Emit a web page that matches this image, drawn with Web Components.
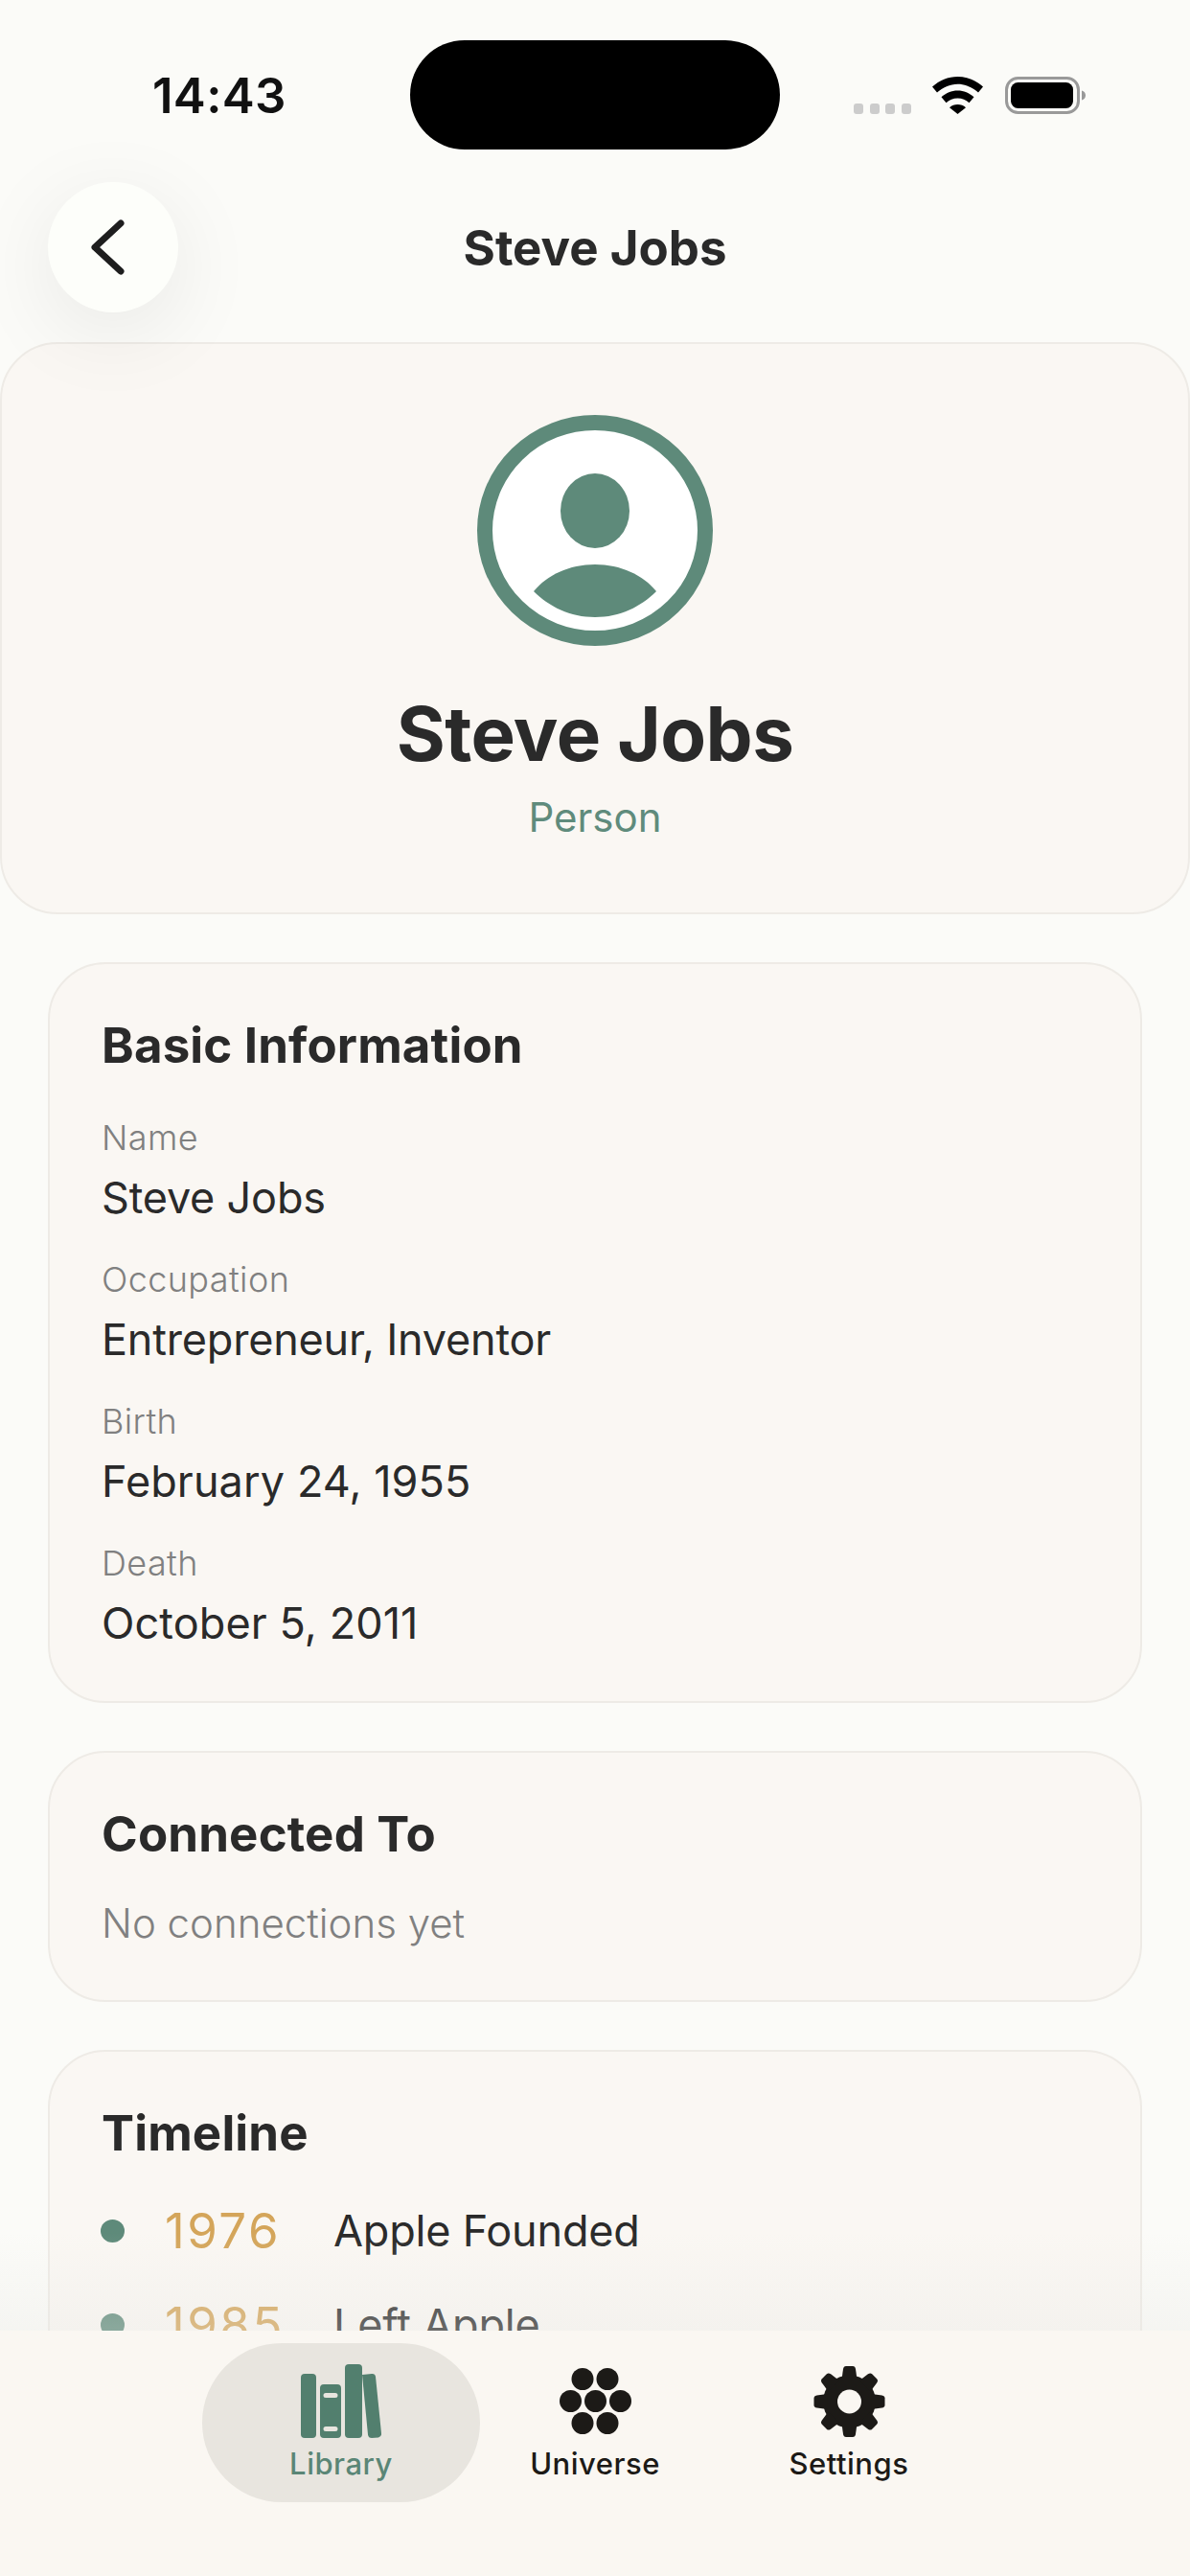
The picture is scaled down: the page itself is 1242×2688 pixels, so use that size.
<!DOCTYPE html>
<html><head><meta charset="utf-8"><style>
html,body{margin:0;padding:0;background:#FBFBF8;}
body{font-family:Inter,"Liberation Sans",sans-serif;color:#2A2A2A;}
</style></head><body>
<app-screen>
  <status-bar></status-bar>
  <nav-header>Steve Jobs</nav-header>
  <profile-card name="Steve Jobs" kind="Person"></profile-card>
  <info-card heading="Basic Information" class="fields">
    <info-field label="Name">Steve Jobs</info-field>
    <info-field label="Occupation">Entrepreneur, Inventor</info-field>
    <info-field label="Birth" date>February 24, 1955</info-field>
    <info-field label="Death" date>October 5, 2011</info-field>
  </info-card>
  <info-card heading="Connected To"><empty-note>No connections yet</empty-note></info-card>
  <info-card heading="Timeline" tall>
    <timeline-row year="1976">Apple Founded</timeline-row>
    <timeline-row year="1985">Left Apple</timeline-row>
  </info-card>
  <tab-bar slot="overlay">
    <tab-item label="Library" icon="library" active></tab-item>
    <tab-item label="Universe" icon="universe"></tab-item>
    <tab-item label="Settings" icon="settings"></tab-item>
  </tab-bar>
</app-screen>
<script>
function def(name, html, init){
  customElements.define(name, class extends HTMLElement{
    constructor(){super();this.attachShadow({mode:'open'});}
    connectedCallback(){this.shadowRoot.innerHTML = typeof html==='function'?html(this):html; }
  });
}
def('app-screen',`<style>
:host{display:flex;flex-direction:column;gap:0;position:relative;width:1242px;height:2688px;overflow:hidden;background:#FBFBF8;}
.fade{position:absolute;left:0;right:0;top:2330px;height:102px;background:linear-gradient(to bottom,rgba(232,232,228,0),rgba(232,232,228,.33));z-index:2;pointer-events:none}
.over{position:absolute;left:0;right:0;bottom:0;z-index:3}
</style><slot></slot><div class="fade"></div><div class="over"><slot name="overlay"></slot></div>`);

def('status-bar',`<style>
:host{display:grid;grid-template-columns:428px 386px 428px;height:190px;flex:none}
.time{padding:71px 0 0 159px;font:600 51px/58px Inter,sans-serif;color:#111;letter-spacing:.3px}
.island{margin-top:42px;height:114px;background:#000;border-radius:57px}
.right{display:flex;align-items:flex-start;padding:80px 0 0 77px;position:relative}
.dots{display:flex;gap:6.5px;margin-top:28px;margin-right:22px}
.dots i{display:block;width:10px;height:11px;border-radius:3px;background:#CCC}
svg{display:block}
.wifi{margin-right:23px}
</style>
<div class="time">14:43</div><div class="island"></div>
<div class="right">
<div class="dots"><i></i><i></i><i></i><i></i></div>
<svg class="wifi" width="53" height="39" viewBox="0 0 53 39"><path d="M26.5 0C16.5 0 7.6 3.9 0 10.5l5 6C11 11.3 18.4 7.7 26.5 7.7S42 11.3 48 16.5l5-6C45.4 3.9 36.5 0 26.5 0Z"/><path d="M26.5 14.5c-6.4 0-12.2 2.4-17 6.8l5 6c3.3-3 7.4-4.9 12-4.9s8.7 1.900 12 4.900l5-6c-4.800-4.400-10.600-6.800-17-6.800Z"/><path d="M26.500 29c-3.300 0-6.200 1.100-8.500 3.200L26.500 39 35 32.200C32.700 30.100 29.800 29 26.500 29Z"/></svg>
<svg width="84" height="39" viewBox="0 0 84 39"><rect x="1.500" y="1.500" width="75" height="36" rx="12" fill="none" stroke="#999" stroke-width="3"/><rect x="6" y="6" width="65" height="27" rx="7.500" fill="#000"/><path d="M80 14.500c2.500.5 4 2.500 4 5s-1.500 4.500-4 5Z" fill="#999"/></svg>
</div>`);

def('nav-header',`<style>
:host{display:grid;grid-template-columns:1fr auto 1fr;align-items:center;height:136px;padding-bottom:31px;flex:none;position:relative;z-index:1}
.back{margin-left:50px;width:136px;height:136px;border-radius:50%;background:#FDFEFA;box-shadow:0 20px 90px rgba(0,0,0,.08);display:flex;align-items:center;justify-content:center}
.t{font:700 51px/60px Inter,sans-serif;color:#2A2A2A;padding-top:2px}
svg{display:block;margin-left:-10px}
</style><div><div class="back"><svg width="40" height="62" viewBox="0 0 40 62"><path d="M33 6 6 31l27 25" fill="none" stroke="#1E1E1E" stroke-width="7" stroke-linecap="round" stroke-linejoin="round"/></svg></div></div>
<div class="t"><slot></slot></div><div></div>`);

def('profile-card',el=>`<style>
:host{display:flex;flex-direction:column;align-items:center;box-sizing:border-box;height:597px;padding-top:74px;background:#FAF7F3;border:2px solid #EEEBE6;border-radius:60px;flex:none}
svg{display:block}
.n{margin-top:45px;font:700 78px/94px Inter,sans-serif;color:#2A2A2A;letter-spacing:-.6px}
.k{margin-top:14px;font:400 42px/52px Inter,sans-serif;color:#5F8B7C}
</style>
<svg width="246" height="241" viewBox="0 0 246 241"><ellipse cx="123" cy="120.500" rx="115" ry="112.500" fill="#fff" stroke="#5E8A7A" stroke-width="16"/><ellipse cx="123" cy="100" rx="36" ry="39" fill="#5E8A7A"/><path d="M59 184C73 167 96 156 123 156s50 11 64 28c-16 16-38 27-64 27s-48-11-64-27Z" fill="#5E8A7A"/></svg>
<div class="n">${el.getAttribute('name')}</div><div class="k">${el.getAttribute('kind')}</div>`);

def('info-card',el=>`<style>
:host{display:block;box-sizing:border-box;margin:50px 50px 0;padding:53px 54px 50px;background:#FAF7F3;border:2px solid #EEEBE6;border-radius:60px;flex:none;${el.hasAttribute('tall')?'min-height:600px;':''}}
h2{margin:0 0 ${el.hasAttribute('tall')?40:el.classList.contains('fields')?40:31}px;font:700 51px/64px Inter,sans-serif;color:#2A2A2A;letter-spacing:.15px}
.list{display:flex;flex-direction:column;gap:${el.hasAttribute('tall')?38:el.classList.contains('fields')?30:0}px}
</style><h2>${el.getAttribute('heading')}</h2><div class="list"><slot></slot></div>`);

def('info-field',el=>`<style>
:host{display:flex;flex-direction:column;gap:8px}
.l{font:300 36px/48px Inter,sans-serif;color:#808080;letter-spacing:.4px}
.v{font:400 45px/62px Inter,sans-serif;color:#2A2A2A;letter-spacing:${el.hasAttribute('date')?'.1px':'-.2px'}}
</style><div class="l">${el.getAttribute('label')}</div><div class="v"><slot></slot></div>`);

def('empty-note',`<style>:host{display:block;font:300 42px/60px Inter,sans-serif;color:#808080}</style><slot></slot>`);

def('timeline-row',el=>`<style>
:host{display:flex;align-items:center;height:60px}
.d{width:25px;height:24px;border-radius:50%;background:#5E8A7A;margin-left:-1px;flex:none}
.y{width:176px;margin-left:42px;flex:none;font:400 51px/60px Inter,sans-serif;letter-spacing:2.5px;color:#D4A55A}
.t{font:400 45px/60px Inter,sans-serif;color:#2A2A2A;letter-spacing:-.2px}
</style><div class="d"></div><div class="y">${el.getAttribute('year')}</div><div class="t"><slot></slot></div>`);

def('tab-bar',`<style>
:host{display:flex;justify-content:center;box-sizing:border-box;height:256px;padding:13px 0 0;background:#FAF7F2}
</style><slot></slot>`);

const gearTeeth=[0,45,90,135,180,225,270,315].map(a=>`<path transform="rotate(${a} 37.500 37)" d="M29.500 14 31 3q.5-3 3-3h7q2.500 0 3 3l1.500 11Z"/>`).join('');
const icons={
library:`<svg width="84" height="77" viewBox="0 0 84 77" fill="#527F6E"><rect x="0" y="10" width="16" height="67" rx="4"/><path fill-rule="evenodd" d="M24 21h14a4 4 0 0 1 4 4v48a4 4 0 0 1-4 4H24a4 4 0 0 1-4-4V25a4 4 0 0 1 4-4Zm2 9a2.500 2.500 0 0 0 0 5h10a2.500 2.500 0 0 0 0-5Zm0 35a2.500 2.500 0 0 0 0 5h10a2.500 2.500 0 0 0 0-5Z"/><rect x="46" y="0" width="18" height="77" rx="4"/><path d="M64 11 74 10q3.500-.3 4 3l6 59q.3 4-3 4.500l-7 .5q-3.500 0-4-3.500Z"/></svg>`,
universe:`<svg width="75" height="69" viewBox="0 0 75 69" fill="#1C1A17"><circle cx="24" cy="11.500" r="11.500"/><circle cx="50" cy="11.500" r="11.500"/><circle cx="11.500" cy="34.500" r="11.500"/><circle cx="37.500" cy="34.500" r="11.500"/><circle cx="63.500" cy="34.500" r="11.500"/><circle cx="24" cy="57.500" r="11.500"/><circle cx="50" cy="57.500" r="11.500"/></svg>`,
settings:`<svg width="75" height="74" viewBox="0 0 75 74" fill="#1C1A17"><circle cx="37.500" cy="37" r="27.500"/>${gearTeeth}<circle cx="37.500" cy="37" r="12.500" fill="#FAF7F2"/></svg>`
};
def('tab-item',el=>{const a=el.hasAttribute('active');const w=el.getAttribute('label')==='Universe'?240:290;return `<style>
:host{display:flex;flex-direction:column;align-items:center;box-sizing:border-box;width:${w}px;height:166px;padding-top:22px;border-radius:83px;flex:none;${a?'background:#E8E5DF;':''}}
svg{display:block}
.i{height:77px;display:flex;align-items:center}
.l{margin-top:7px;font:450 31px/40px Inter,sans-serif;color:${a?'#5A8676':'#1C1A17'};letter-spacing:.5px}
</style><div class="i">${icons[el.getAttribute('icon')]}</div><div class="l">${el.getAttribute('label')}</div>`});
</script>
</body></html>
